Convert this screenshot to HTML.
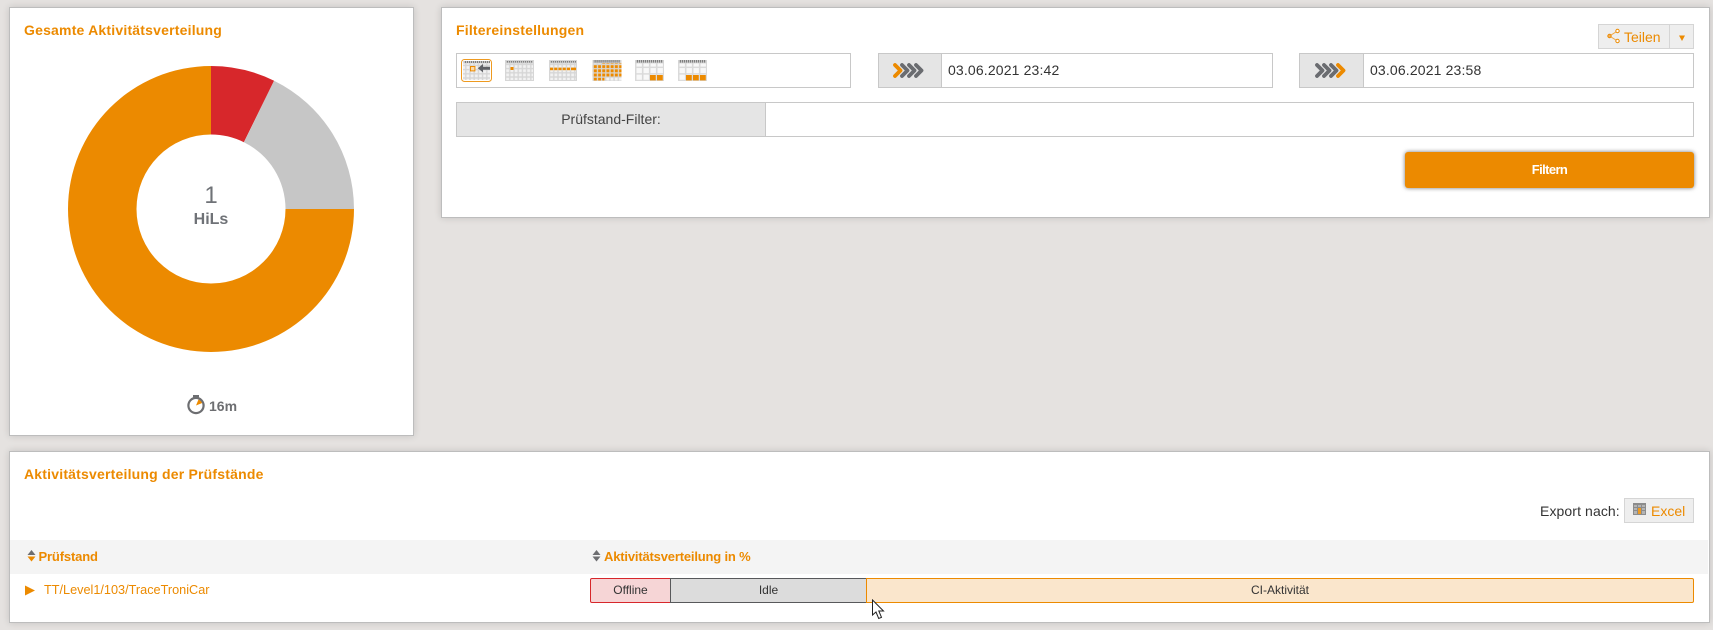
<!DOCTYPE html>
<html><head><meta charset="utf-8"><style>
html,body{margin:0;padding:0}
body{width:1713px;height:630px;background:#e5e2e0;position:relative;overflow:hidden;font-family:"Liberation Sans",sans-serif;color:#333}
.p{position:absolute;background:#fff;border:1px solid #bdbdbd;box-sizing:border-box;box-shadow:0 0 7px rgba(0,0,0,.14)}
.a{position:absolute;white-space:nowrap}
.t{font-size:14px;font-weight:bold;color:#ec8a00;letter-spacing:.2px;line-height:16px}
.b{position:absolute;box-sizing:border-box;border:1px solid #c8c8c8}
.g{background:#e5e5e5}
.d{font-size:14px;line-height:34px;letter-spacing:.15px;color:#333}
.s{position:absolute;box-sizing:border-box;height:25px;top:578px;text-align:center;font-size:12px;line-height:23px;color:#333}
</style></head><body>

<div class="p" style="left:9px;top:7px;width:405px;height:429px"></div>
<div class="a t" style="left:24px;top:22px">Gesamte Aktivitätsverteilung</div>
<svg class="a" style="left:0;top:0" width="430" height="430">
<path d="M211 66A143 143 0 0 1 274.1 80.7L243.9 142.2A74.5 74.5 0 0 0 211 134.5Z" fill="#d7272b"/>
<path d="M274.1 80.7A143 143 0 0 1 354 209H285.5A74.5 74.5 0 0 0 243.9 142.2Z" fill="#c6c6c6"/>
<path d="M354 209A143 143 0 1 1 211 66V134.5A74.5 74.5 0 1 0 285.5 209Z" fill="#ec8a00"/>
</svg>
<div class="a" style="left:161px;width:100px;text-align:center;top:182px;font-size:24px;line-height:28px;color:#6f7277">1</div>
<div class="a" style="left:161px;width:100px;text-align:center;top:210px;font-size:16px;font-weight:bold;line-height:20px;color:#6f7277">HiLs</div>
<svg class="a" style="left:186px;top:394px" width="20" height="21" viewBox="0 0 20 21">
<rect x="7" y="1" width="6" height="2.4" fill="#6d6e71"/><rect x="9" y="2" width="2" height="3" fill="#6d6e71"/>
<path d="M10 11.5L12.5 5.5A7 7 0 0 1 16.2 9Z" fill="#ec8a00"/>
<circle cx="10" cy="11.5" r="7.6" fill="none" stroke="#6d6e71" stroke-width="2.2"/>
</svg>
<div class="a" style="left:209px;top:398px;font-size:14px;font-weight:bold;line-height:16px;color:#6d6e71">16m</div>

<div class="p" style="left:441px;top:7px;width:1269px;height:211px"></div>
<div class="a t" style="left:456px;top:22px">Filtereinstellungen</div>

<div class="b" style="left:1598px;top:24px;width:96px;height:25px;background:#eee;border-color:#d5d5d5"></div>
<div class="a" style="left:1669px;top:24px;width:1px;height:25px;background:#d5d5d5"></div>
<svg class="a" style="left:1607px;top:28px" width="13" height="16" viewBox="0 0 13 16">
<path d="M10.5 3L2.5 8L10.5 13" fill="none" stroke="#f0a640" stroke-width="1"/>
<circle cx="10.5" cy="3" r="1.7" fill="#fff" stroke="#ec8a00"/><circle cx="2.5" cy="8" r="1.7" fill="#f2b060" stroke="#ec8a00"/><circle cx="10.5" cy="13" r="1.7" fill="#fff" stroke="#ec8a00"/>
</svg>
<div class="a" style="left:1624px;top:28px;font-size:14px;line-height:18px;color:#ec8a00">Teilen</div>
<svg class="a" style="left:1679px;top:35px" width="7" height="7"><path d="M0 .5H6L3 6Z" fill="#ec8a00"/></svg>

<div class="b" style="left:456px;top:53px;width:395px;height:35px"></div>
<svg class="a" style="left:456px;top:53px" width="395" height="35">
<defs>
<pattern id="gs" width="4.2" height="4.2" patternUnits="userSpaceOnUse" x="0.6" y="0.2"><rect width="4.2" height="4.2" fill="#d6d6d6"/><rect x=".7" y=".7" width="2.8" height="2.8" fill="#f2f2f2"/></pattern>
<pattern id="gl" width="7" height="6.6" patternUnits="userSpaceOnUse" x="0.5" y="0.4"><rect width="7" height="6.6" fill="#dadada"/><rect x="1" y="1" width="5.4" height="5.2" fill="#f8f8f8"/></pattern>
<pattern id="tk" width="2" height="3" patternUnits="userSpaceOnUse"><rect width="1.2" height="3" fill="#7f7f7f"/></pattern>
<pattern id="og" width="4.2" height="4.2" patternUnits="userSpaceOnUse" x="0.6" y="0.2"><rect x=".7" y=".7" width="3" height="3" fill="#ec8a00"/></pattern>
</defs>
<!-- 1 -->
<g transform="translate(5,8)">
<rect x="0.5" y="-1.5" width="30" height="22" rx="3" fill="#fff" stroke="#ee9a20"/>
<rect x="2" y="2" width="27" height="17" fill="url(#gs)"/><rect x="2" y="0" width="27" height="2.5" fill="#d8d8d8"/><rect x="3" y="0" width="26" height="2" fill="url(#tk)"/>
<rect x="9.5" y="5.5" width="4.4" height="4.4" fill="#fbd9a8" stroke="#ec8a00"/>
<path d="M29 5.7H22V3L16.8 7.2L22 11.4V8.7H29Z" fill="#5f6166"/>
</g>
<!-- 2 -->
<g transform="translate(49,7)">
<rect width="29" height="21" fill="url(#gs)"/><rect width="29" height="3.4" fill="#d4d4d4"/><rect x="1" width="27" height="2.6" fill="url(#tk)"/>
<rect x=".5" y=".5" width="28" height="20" fill="none" stroke="#d6d6d6"/>
<rect x="5.5" y="7" width="3" height="3" fill="#ec8a00"/>
</g>
<!-- 3 -->
<g transform="translate(93,7)">
<rect width="28" height="21" fill="url(#gs)"/><rect width="28" height="3.4" fill="#d4d4d4"/><rect x="1" width="26" height="2.6" fill="url(#tk)"/>
<rect x=".5" y=".5" width="27" height="20" fill="none" stroke="#d6d6d6"/>
<rect x="1" y="7.6" width="26" height="2.6" fill="#ec8a00"/>
<g fill="#dcdcdc"><rect x="4.2" y="7" width="1" height="4"/><rect x="8.4" y="7" width="1" height="4"/><rect x="12.6" y="7" width="1" height="4"/><rect x="16.8" y="7" width="1" height="4"/><rect x="21" y="7" width="1" height="4"/></g>
</g>
<!-- 4 -->
<g transform="translate(136.5,7)">
<rect width="29" height="21" fill="url(#gs)"/><rect width="29" height="3.4" fill="#d4d4d4"/><rect x="1" width="27" height="2.6" fill="url(#tk)"/>
<rect x="9" y="3.4" width="20" height="1.4" fill="url(#og)"/>
<rect x="0" y="5" width="29" height="12" fill="url(#og)"/>
<rect x="1" y="17" width="11" height="3.5" fill="url(#og)"/>
</g>
<!-- 5 -->
<g transform="translate(179,7)">
<rect width="29" height="21" fill="url(#gl)"/><rect width="29" height="3.4" fill="#d4d4d4"/><rect x="1" width="27" height="2.6" fill="url(#tk)"/>
<rect x="15" y="15" width="5.8" height="5.4" fill="#ec8a00"/><rect x="22" y="15" width="5.8" height="5.4" fill="#ec8a00"/>
</g>
<!-- 6 -->
<g transform="translate(222,7)">
<rect width="29" height="21" fill="url(#gl)"/><rect width="29" height="3.4" fill="#d4d4d4"/><rect x="1" width="27" height="2.6" fill="url(#tk)"/>
<rect x="8" y="15" width="5.8" height="5.4" fill="#ec8a00"/><rect x="15" y="15" width="5.8" height="5.4" fill="#ec8a00"/><rect x="22" y="15" width="5.8" height="5.4" fill="#ec8a00"/>
</g>
</svg>

<div class="b g" style="left:878px;top:53px;width:64px;height:35px"></div>
<div class="b" style="left:941px;top:53px;width:332px;height:35px"></div>
<svg class="a" style="left:892px;top:62px" width="34" height="17" viewBox="0 0 34 17">
<g fill="none" stroke-width="3.8" stroke-linejoin="round" stroke-linecap="round">
<path d="M24 3L29.5 8.5L24 14" stroke="#6a6c70"/><path d="M17 3L22.5 8.5L17 14" stroke="#6a6c70"/><path d="M10 3L15.5 8.5L10 14" stroke="#6a6c70"/><path d="M3 3L8.5 8.5L3 14" stroke="#ec8a00"/></g>
</svg>
<div class="a d" style="left:948px;top:53px">03.06.2021 23:42</div>

<div class="b g" style="left:1299px;top:53px;width:65px;height:35px"></div>
<div class="b" style="left:1363px;top:53px;width:331px;height:35px"></div>
<svg class="a" style="left:1314px;top:62px" width="34" height="17" viewBox="0 0 34 17">
<g fill="none" stroke-width="3.8" stroke-linejoin="round" stroke-linecap="round">
<path d="M3 3L8.5 8.5L3 14" stroke="#6a6c70"/><path d="M10 3L15.5 8.5L10 14" stroke="#6a6c70"/><path d="M17 3L22.5 8.5L17 14" stroke="#6a6c70"/><path d="M24 3L29.5 8.5L24 14" stroke="#ec8a00"/></g>
</svg>
<div class="a d" style="left:1370px;top:53px">03.06.2021 23:58</div>

<div class="b g" style="left:456px;top:102px;width:310px;height:35px;text-align:center;font-size:14px;line-height:33px;color:#444">Prüfstand-Filter:</div>
<div class="b" style="left:765px;top:102px;width:929px;height:35px"></div>

<div class="a" style="left:1405px;top:152px;width:289px;height:36px;background:#ec8a00;border-radius:3px;box-shadow:0 0 4px rgba(0,0,0,.55);text-align:center;color:#fff;font-size:13px;font-weight:bold;line-height:36px;letter-spacing:-.6px">Filtern</div>

<div class="p" style="left:9px;top:451px;width:1701px;height:172px"></div>
<div class="a t" style="left:24px;top:466px">Aktivitätsverteilung der Prüfstände</div>
<div class="a" style="left:1540px;top:502px;font-size:14px;line-height:18px;letter-spacing:.1px;color:#333">Export nach:</div>
<div class="b" style="left:1624px;top:498px;width:70px;height:25px;background:#eee;border-color:#d5d5d5"></div>
<svg class="a" style="left:1633px;top:503px" width="13" height="12">
<rect width="13" height="12" fill="#8c8c8c"/><g fill="#b4b4b4"><rect x="1" y="2" width="3" height="2"/><rect x="5" y="2" width="3" height="2"/><rect x="9" y="2" width="3" height="2"/><rect x="1" y="5" width="3" height="2"/><rect x="9" y="5" width="3" height="2"/><rect x="1" y="8" width="3" height="3"/><rect x="9" y="8" width="3" height="3"/></g><rect x="5" y="5" width="3" height="6" fill="#ee9a20"/>
</svg>
<div class="a" style="left:1651px;top:502px;font-size:14px;line-height:18px;color:#ec8a00">Excel</div>

<div class="a" style="left:10px;top:540px;width:1698px;height:34px;background:#f4f4f4"></div>
<svg class="a" style="left:27px;top:550px" width="9" height="12"><path d="M4.5 0L8.5 5H.5Z" fill="#6d6e71"/><path d="M.5 6.5H8.5L4.5 11.5Z" fill="#ec8a00"/></svg>
<div class="a" style="left:38.5px;top:548px;font-size:13px;font-weight:bold;line-height:17px;color:#ec8a00;letter-spacing:-.15px">Prüfstand</div>
<svg class="a" style="left:592px;top:550px" width="9" height="12"><path d="M4.5 0L8.5 5H.5Z" fill="#6d6e71"/><path d="M.5 6.5H8.5L4.5 11.5Z" fill="#6d6e71"/></svg>
<div class="a" style="left:604px;top:548px;font-size:13px;font-weight:bold;line-height:17px;color:#ec8a00;letter-spacing:-.18px">Aktivitätsverteilung in %</div>

<svg class="a" style="left:25px;top:585px" width="11" height="11"><path d="M0 .5L10 5.5L0 10.5Z" fill="#ec8a00"/></svg>
<div class="a" style="left:44px;top:582px;font-size:12.7px;line-height:16px;color:#ec8a00">TT/Level1/103/TraceTroniCar</div>

<div class="s" style="left:590px;width:81px;background:#f6d5d6;border:1px solid #d7272b;border-radius:2px 0 0 2px">Offline</div>
<div class="s" style="left:670px;width:197px;background:#dcdcdc;border:1px solid #58595b">Idle</div>
<div class="s" style="left:866px;width:828px;background:#fae6cc;border:1px solid #ec8a00;border-radius:0 2px 2px 0">CI-Aktivität</div>

<svg class="a" style="left:871px;top:599px" width="15" height="22"><path d="M1.5 1V16L5 13L7.7 19.5L10.5 18.3L7.8 12H12.5Z" fill="#fff" stroke="#222" stroke-width="1"/></svg>
</body></html>
